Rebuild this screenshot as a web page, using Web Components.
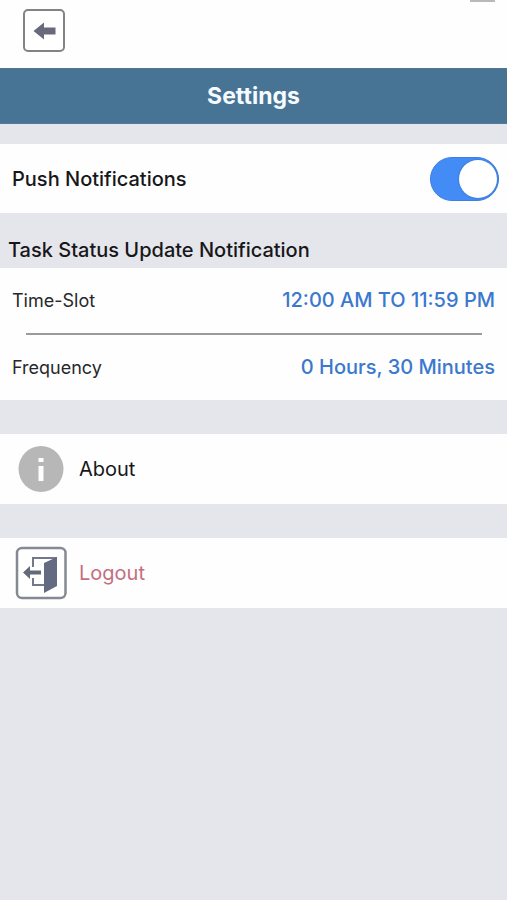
<!DOCTYPE html>
<html lang="en">
<head>
<meta charset="utf-8">
<meta name="viewport" content="width=device-width, initial-scale=1">
<title>Settings</title>
<style>
html, body { margin: 0; min-height: 100%; background: #e5e6eb; }
body { font-family: Inter, "Liberation Sans", sans-serif; color: #17171a; }
</style>
</head>
<body>
<settings-page></settings-page>
<script>
const define = (name, html) => {
  const template = document.createElement('template');
  template.innerHTML = html;
  customElements.define(name, class extends HTMLElement {
    constructor() {
      super();
      this.attachShadow({ mode: 'open' }).append(template.content.cloneNode(true));
    }
  });
};

define('top-bar', `
<style>
:host { display: flex; justify-content: space-between; align-items: flex-start; height: 68px; padding: 0 12px 0 23px; box-sizing: border-box; background: #fefefe; }
button { margin: 9px 0 0; padding: 0; border: 0; background: none; width: 42px; height: 43px; }
svg { display: block; }
.handle { width: 25px; height: 2px; background: #b9b9bb; }
</style>
<button type="button" aria-label="Back">
<svg width="42" height="43" viewBox="0 0 42 43">
<rect x="1" y="1" width="40" height="41" rx="4" fill="#fff" stroke="#828287" stroke-width="2"/>
<path d="M10.500 22 21 13.500V18.500H32.500V25.500H21V30.500Z" fill="#686a7c"/>
</svg>
</button>
<div class="handle"></div>`);

define('title-bar', `
<style>
:host { display: flex; align-items: center; justify-content: center; height: 56px; box-sizing: border-box; background: #477395; border-top: 1px solid #55758f; border-bottom: 1px solid #55799a; color: #f5fbff; }
h1 { margin: 0; font-size: 23px; line-height: 28px; font-weight: 650; }
</style>
<h1><slot></slot></h1>`);

define('settings-group', `
<style>
:host { display: block; background: #fefefe; margin-bottom: 34px; }
</style>
<slot></slot>`);

define('section-title', `
<style>
:host { display: block; padding: 25px 8px 6px; }
h2 { margin: 0; font-size: 20px; line-height: 24px; font-weight: 550; }
</style>
<h2><slot></slot></h2>`);

define('toggle-row', `
<style>
:host { display: block; }
label { display: flex; align-items: center; justify-content: space-between; height: 69px; padding: 0 8px 0 12px; font-size: 20px; line-height: 24px; font-weight: 550; }
input { appearance: none; display: flex; justify-content: flex-end; align-items: center; margin: 0; width: 69px; height: 44px; padding: 0 1px; box-sizing: border-box; border-radius: 22px; background: #438cf6; border: 1px solid #3b7fe0; }
input::before { content: ""; width: 38px; height: 38px; border-radius: 50%; background: #fff; box-shadow: 0 0 2px #2866bd; }
input:not(:checked) { justify-content: flex-start; background: #c9cad0; border-color: #bbb; }
</style>
<label><slot></slot><input type="checkbox" role="switch" checked></label>`);

define('value-row', `
<style>
:host { display: block; }
button { display: flex; align-items: center; justify-content: space-between; width: 100%; box-sizing: border-box; padding: 20px 12px; border: 0; background: none; font: inherit; color: #28282b; font-size: 18px; line-height: 25px; text-align: left; }
.value { font-size: 20px; font-weight: 550; color: #3b78ce; }
</style>
<button type="button"><span><slot></slot></span><span class="value"><slot name="value"></slot></span></button>`);

define('row-rule', `
<style>
:host { display: block; margin: 0 25px 0 26px; height: 2px; background: #9b9b9d; }
</style>`);

define('action-row', `
<style>
:host { display: block; }
button { display: flex; align-items: center; gap: 12px; width: 100%; height: 70px; box-sizing: border-box; padding: 0 15px; border: 0; background: none; font: inherit; color: inherit; font-size: 20px; line-height: 24px; text-align: left; }
::slotted(svg) { display: block; flex: none; }
</style>
<button type="button"><slot name="icon"></slot><span><slot></slot></span></button>`);

define('settings-page', `
<style>
:host { display: block; }
main { display: block; }
.first { margin: 20px 0 0; }
.logout { color: #c46e7f; }
</style>
<top-bar></top-bar>
<title-bar>Settings</title-bar>
<main>
<settings-group class="first"><toggle-row>Push Notifications</toggle-row></settings-group>
<section-title>Task Status Update Notification</section-title>
<settings-group>
<value-row>Time-Slot<span slot="value">12:00 AM TO 11:59 PM</span></value-row>
<row-rule></row-rule>
<value-row>Frequency<span slot="value">0 Hours, 30 Minutes</span></value-row>
</settings-group>
<settings-group>
<action-row>About
<svg slot="icon" width="52" height="54" viewBox="0 0 52 54" aria-hidden="true">
<ellipse cx="26" cy="27" rx="22.500" ry="23" fill="#b7b7b7"/>
<path d="M23.500 16h5v4h-5zM23.500 24h5v15h-5z" fill="#fff"/>
</svg></action-row>
</settings-group>
<settings-group>
<action-row class="logout">Logout
<svg slot="icon" width="52" height="54" viewBox="0 0 52 54" aria-hidden="true">
<rect x="2" y="2" width="48.500" height="50" rx="5" fill="#fff" stroke="#858993" stroke-width="2.500"/>
<path d="M18 21V12H42M18 32V39H30" fill="none" stroke="#73798a" stroke-width="2"/>
<path d="M29 17 42 11V40L29 47Z" fill="#626b81"/>
<path d="M8 26.500 15 20V24.500H26V28.500H15V33Z" fill="#656a7a"/>
</svg></action-row>
</settings-group>
</main>`);
</script>
</body>
</html>
